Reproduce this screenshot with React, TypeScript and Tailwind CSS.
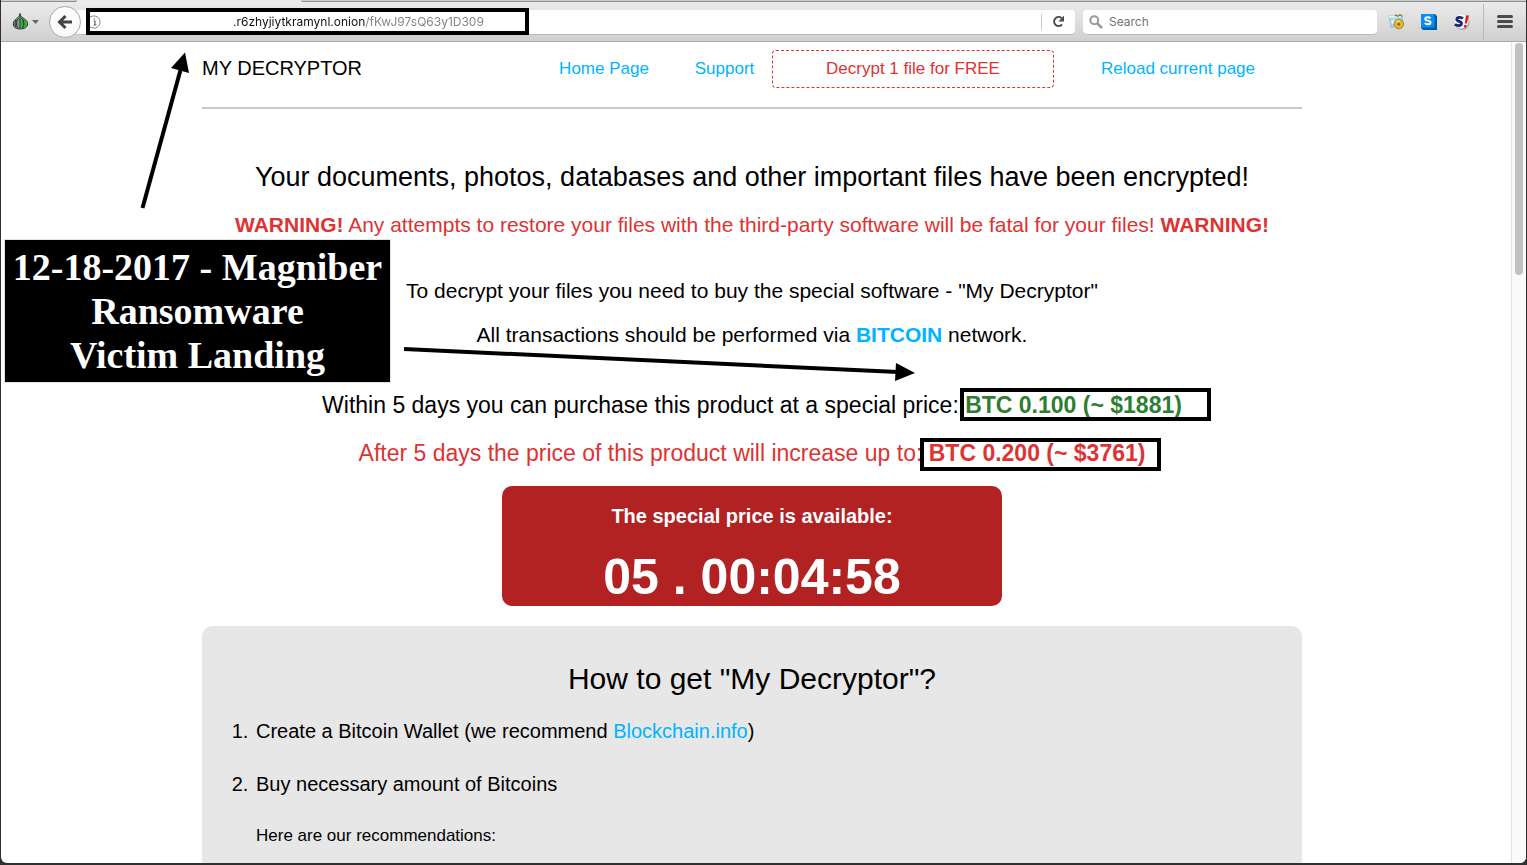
import type { ReactNode } from "react";

function OnionIcon() {
  return (
    <svg width="17" height="17" viewBox="0 0 17 17" aria-hidden="true">
      <path d="M8 1c.6 2 2 3 4 4.600C15 7.700 16 9.500 15.500 12c-.5 2.300-3.500 4-7 4s-6.800-1.400-7.200-4C.9 9.500 2.300 7.500 4.500 5.600 6.500 4 7.500 3 8 1z" fill="#86a188" stroke="#2c3b2e" strokeWidth="1" />
      <path d="M9 3.500c1 1.500 5.500 4 5.500 7.500 0 2.500-2.500 4-5.500 4.400z" fill="#2fae48" />
      <path d="M8 3v12.500M6.500 5.500c-2 2-3 6-.5 9.500M4.500 7c-1.700 2-2 5-.5 7M10 5.500c2.200 3 2.400 6.500.5 9.500" fill="none" stroke="#18301c" strokeWidth="1" />
      <path d="M8 3c-.6-1-.4-2 0-3" stroke="#333" fill="none" />
    </svg>
  );
}

function TabStripEdge() {
  return (
    <div className="flex h-[2px] shrink-0 bg-[#e9e9e9]">
      <div className="w-[76px] rounded-br-xs border-b border-[#8d8d8d] bg-[#cfcfcf]" />
      <div className="w-[224px]" />
      <div className="flex-1 rounded-bl-xs border-b border-[#8d8d8d] bg-[#cfcfcf]" />
    </div>
  );
}

function Toolbar() {
  return (
    <header className="flex h-10 shrink-0 items-center border-b border-b-[#aaaaaa] bg-linear-to-b from-[#ebebeb] to-[#d0d0d0] font-['Inter',sans-serif] text-xs">
      <button type="button" aria-label="Tor options" className="ml-[11px] flex items-center gap-[3px]">
        <OnionIcon />
        <svg width="7" height="4" viewBox="0 0 7 4" aria-hidden="true"><path d="M0 0h7L3.500 4z" fill="#666" /></svg>
      </button>
      <button type="button" aria-label="Back" className="relative z-10 ml-[10px] flex size-8 shrink-0 items-center justify-center rounded-full border border-[#aaaaaa] bg-[#fbfbfb]">
        <svg width="16" height="16" viewBox="0 0 16 16" aria-hidden="true">
          <path d="M8.500 2L2.500 8l6 6M3 8h12" fill="none" stroke="#444" strokeWidth="3" />
        </svg>
      </button>
      <div className="-ml-1 flex h-6 flex-1 items-center rounded-r-sm bg-white shadow-[0_1px_0_#bcbcbc]">
        <div className="ml-[9px] flex h-[27px] w-[443px] shrink-0 items-center border-4 border-black bg-white">
          <svg width="12" height="14" viewBox="0 0 12 14" aria-hidden="true">
            <path d="M0 2C6-1 10 3 10 7s-4 8-10 5" fill="none" stroke="#888" />
            <path d="M3.500 6h1.500v4M3.500 10h3M4.300 3.200v1.400" fill="none" stroke="#666" strokeWidth="1.200" />
          </svg>
          <input
            type="text"
            aria-label="Address"
            spellCheck={false}
            defaultValue=".r6zhyjiytkramynl.onion/fKwJ97sQ63y1D309"
            className="ml-[131px] h-[19px] min-w-0 flex-1 bg-[linear-gradient(to_right,#111_132px,#808080_132px)] bg-clip-text text-xs text-transparent outline-none"
          />
        </div>
        <div className="ml-auto h-4 w-px bg-[#cccccc]" />
        <button type="button" aria-label="Reload" className="flex h-6 w-[33px] items-center justify-center">
          <svg width="13" height="13" viewBox="0 0 13 13" aria-hidden="true">
            <path d="M10 9.500A4.500 4.500 0 1 1 9.500 3" fill="none" stroke="#4a4a4a" strokeWidth="2" />
            <path d="M12 .5v6H6.500z" fill="#4a4a4a" />
          </svg>
        </button>
      </div>
      <label className="ml-2 flex h-6 w-[294px] shrink-0 items-center gap-[6px] rounded-sm bg-white pl-[6px] shadow-[0_1px_0_#bcbcbc]">
        <svg width="14" height="14" viewBox="0 0 14 14" aria-hidden="true">
          <circle cx="5.300" cy="5.300" r="4" fill="none" stroke="#999" strokeWidth="2" />
          <path d="M8.300 8.300L13 13" stroke="#999" strokeWidth="2.500" />
        </svg>
        <input type="search" aria-label="Search" placeholder="Search" className="h-5 min-w-0 flex-1 text-xs outline-none placeholder:text-[#737373]" />
      </label>
      <div className="ml-[11px] flex items-center gap-4">
        <button type="button" aria-label="Cookie manager" className="flex">
          <svg width="17" height="16" viewBox="0 0 17 16">
            <path d="M1 2l13-1 1 8-12 5z" fill="#a9d8f0" stroke="#7db6d8" strokeWidth=".7" />
            <path d="M1 2l13-1v2L1 4z" fill="#e8f6e0" />
            <path d="M7 1.500h2M11 1.300h2" stroke="#e04a2a" strokeWidth="1.600" />
            <path d="M9 2h2M13 2h1.500" stroke="#3aaa44" strokeWidth="1.600" />
            <path d="M3 7l3-1 1 3-3 1z" fill="#e9f7ff" />
            <circle cx="10.800" cy="10" r="4.800" fill="#e3b433" stroke="#a77b16" strokeWidth=".8" />
            <path d="M8 8.500a3.500 3.500 0 0 1 4-1.500" stroke="#fff0a0" fill="none" />
            <path d="M10.800 8.800v2.800M9.400 10.200h2.800" stroke="#6b4a08" />
          </svg>
        </button>
        <button type="button" aria-label="Stylish" className="flex">
          <svg width="16" height="16" viewBox="0 0 16 16">
            <path d="M0 0h14l2 2v14H2l-2-2z" fill="#045a9e" />
            <path d="M0 0h13.500v13.500H0z" fill="#078ef0" />
            <path d="M9.500 4.200C8 2.800 4.200 2.800 4.200 4.900c0 2.300 5.400 1.200 5.400 3.600 0 2.200-4 2.300-5.800.6" fill="none" stroke="#fff" strokeWidth="1.900" />
          </svg>
        </button>
        <button type="button" aria-label="Script blocker" className="flex">
          <svg width="18" height="16" viewBox="0 0 18 16">
            <circle cx="9" cy="8.500" r="7.500" fill="#a9a9a9" />
            <circle cx="8.500" cy="7.500" r="7" fill="#fafafa" />
            <path d="M9.800 4.600C8 2.600 4 3 3.800 5.300c-.2 2.500 5 1.700 4.700 4.300-.3 2.500-4.500 2.600-6.600.6" fill="none" stroke="#15296e" strokeWidth="2.800" />
            <path d="M13 1.500h3l-2.200 8h-2zM11.300 11h2.400l-.6 2.400h-2.400z" fill="#e3141b" />
          </svg>
        </button>
      </div>
      <div className="ml-3 h-9 w-px bg-[#bbbbbb]" />
      <button type="button" aria-label="Menu" className="mr-[13px] ml-[13px] flex w-4 flex-col gap-[2px]">
        <span className="h-[3px] rounded-xs bg-[#4a4a4a]" />
        <span className="h-[3px] rounded-xs bg-[#4a4a4a]" />
        <span className="h-[3px] rounded-xs bg-[#4a4a4a]" />
      </button>
    </header>
  );
}

function Link({ children, className = "" }: { children: ReactNode; className?: string }) {
  return <a href="#" className={"text-[#00b4ff] " + className}>{children}</a>;
}

function Content() {
  return (
    <main className="mx-auto w-full max-w-[1100px] text-center text-xl leading-6 text-black">
      <div className="flex items-center border-b-2 border-[#cdc6c9] pt-2 pb-[19px]">
        <div className="pb-[2px] text-left">MY DECRYPTOR</div>
        <nav className="ml-auto flex items-center text-[17px]">
          <Link className="w-[146px]">Home Page</Link>
          <Link className="w-[95px]">Support</Link>
          <a href="#" className="w-[282px] rounded-sm border border-dashed border-[#dd3333] py-[6px] text-[#dd3333]">Decrypt 1 file for FREE</a>
          <Link className="w-[248px]">Reload current page</Link>
        </nav>
      </div>
      <h1 className="mt-[52px] text-[27px] leading-8">Your documents, photos, databases and other important files have been encrypted!</h1>
      <p className="mt-4 text-[21px] leading-8 text-[#dd3333]">
        <strong>WARNING!</strong> Any attempts to restore your files with the third-party software will be fatal for your files! <strong>WARNING!</strong>
      </p>
      <p className="mt-[38px] text-[21px]">To decrypt your files you need to buy the special software - "My Decryptor"</p>
      <p className="mt-5 text-[21px]">All transactions should be performed via <Link className="font-bold">BITCOIN</Link> network.</p>
      <p className="mt-[42px] text-[23px] leading-8">
        Within 5 days you can purchase this product at a special price:{" "}
        <strong className="relative text-[#2e7d32]">
          BTC 0.100 (~ $1881)
          <span className="absolute -top-1 -right-[29px] -bottom-[3px] -left-[5px] border-4 border-black" />
        </strong>
      </p>
      <p className="mt-4 text-[23px] leading-8 text-[#dd3333]">
        After 5 days the price of this product will increase up to:{" "}
        <strong className="relative">
          BTC 0.200 (~ $3761)
          <span className="absolute -top-[2px] -right-4 -bottom-[5px] -left-[9px] border-4 border-black" />
        </strong>
      </p>
      <section className="mx-auto mt-[17px] max-w-[500px] rounded-[10px] bg-[#b22222] pt-[18px] font-bold text-white">
        <h2>The special price is available:</h2>
        <div className="pt-5 text-[50px] leading-[58px]">05 . 00:04:58</div>
      </section>
      <section className="mt-5 h-[400px] rounded-t-[10px] bg-[#e7e7e7] px-[30px] pt-[33px] text-left">
        <h2 className="text-center text-3xl leading-10">How to get "My Decryptor"?</h2>
        <ol className="list-decimal pt-5 pl-[22px]">
          <li className="mb-[29px] pl-[2px]">Create a Bitcoin Wallet (we recommend <Link>Blockchain.info</Link>)</li>
          <li className="pl-[2px]">
            Buy necessary amount of Bitcoins
            <p className="mt-7 text-[17px]">Here are our recommendations:</p>
          </li>
        </ol>
      </section>
    </main>
  );
}

function Annotations() {
  return (
    <>
      <svg className="pointer-events-none absolute top-0 left-0" width="930" height="400" viewBox="0 0 930 400" aria-hidden="true">
        <path d="M142.500 208L180.500 70" stroke="#000" strokeWidth="4" />
        <path d="M185 52.500L189 73 171 68z" />
        <path d="M404 349L898 372" stroke="#000" strokeWidth="4" />
        <path d="M915 373L896 363 895 381z" />
      </svg>
      <div className="absolute top-60 left-[5px] w-[385px] bg-black py-[5px] text-center font-['Liberation_Serif',serif] text-[38px] leading-[44px] font-bold text-white outline outline-[#e2e2e2]">
        12-18-2017 - Magniber Ransomware<br />Victim Landing
      </div>
    </>
  );
}

export default function App() {
  return (
    <div className="relative h-screen overflow-hidden bg-[#303030] px-px pb-[2px] font-['Liberation_Sans',Arial,sans-serif]">
      <div className="flex h-full flex-col overflow-hidden rounded-b-md bg-white">
        <TabStripEdge />
        <Toolbar />
        <div className="flex min-h-0 flex-1">
          <div className="min-w-0 flex-1 overflow-hidden pr-2">
            <Content />
          </div>
          <div className="w-[15px] shrink-0 border-l border-[#e3e3e3] bg-[#fafafa] px-[3px] pt-px">
            <div className="h-[232px] rounded-full bg-[#c1c1c1]" />
          </div>
        </div>
      </div>
      <Annotations />
    </div>
  );
}
